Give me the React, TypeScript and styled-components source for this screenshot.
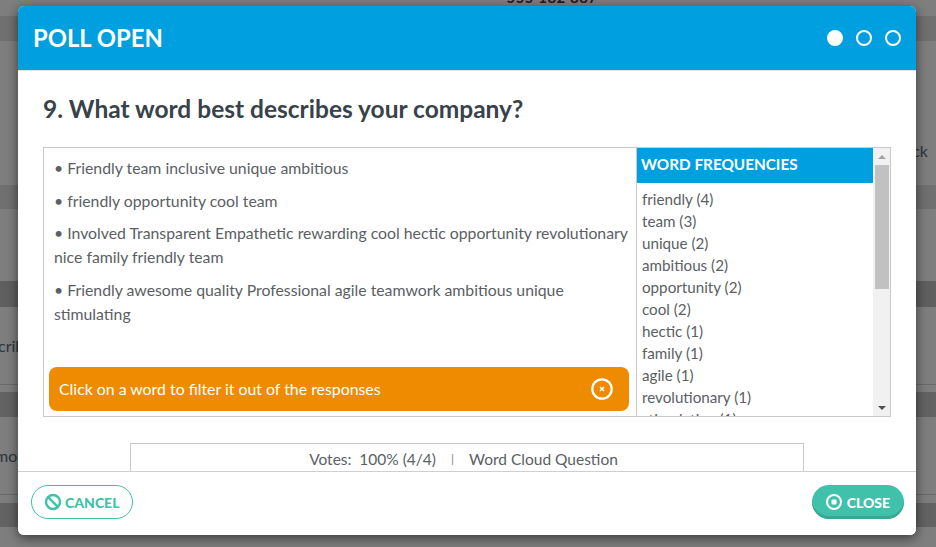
import styled, { createGlobalStyle } from "styled-components";

const GlobalStyle = createGlobalStyle`
  html, body {
    margin: 0;
    height: 100%;
    overflow: hidden;
    font-family: "Lato", "Open Sans", sans-serif;
  }
`;

const RESPONSES = [
  "• Friendly team inclusive unique ambitious",
  "• friendly opportunity cool team",
  "• Involved Transparent Empathetic rewarding cool hectic opportunity revolutionary nice family friendly team",
  "• Friendly awesome quality Professional agile teamwork ambitious unique stimulating",
];

const WORDS = [
  "friendly (4)",
  "team (3)",
  "unique (2)",
  "ambitious (2)",
  "opportunity (2)",
  "cool (2)",
  "hectic (1)",
  "family (1)",
  "agile (1)",
  "revolutionary (1)",
  "stimulating (1)",
];

const Page = styled.div`
  position: relative;
  width: 936px;
  height: 547px;
  overflow: hidden;
  background: #7e7e7e;
`;

const TopNumber = styled.div`
  height: 16px;
  display: flex;
  align-items: flex-start;
  justify-content: center;
  padding-left: 168px;
  box-sizing: border-box;
  overflow: hidden;
  color: #1c1c1c;
  font-size: 15px;
  font-weight: 700;
  letter-spacing: 0.5px;

  span {
    margin-top: -9px;
    line-height: 12px;
  }
`;

const Band = styled.div<{ $height: number; $shade: string }>`
  height: ${(p) => p.$height}px;
  background: ${(p) => p.$shade};
`;

const TextRow = styled.div<{ $height: number; $right?: boolean; $line?: boolean; $top?: number }>`
  height: ${(p) => p.$height}px;
  box-sizing: border-box;
  display: flex;
  align-items: center;
  justify-content: ${(p) => (p.$right ? "flex-end" : "flex-start")};
  padding: ${(p) => p.$top ?? 0}px ${(p) => (p.$right ? 8 : 0)}px 0 0;
  border-bottom: ${(p) => (p.$line ? "1px solid #6a6a6a" : "none")};
  color: #2b3440;
  font-size: 16px;
`;

const ClippedText = styled.span<{ $shift: number }>`
  margin-left: ${(p) => p.$shift}px;
`;

const Overlay = styled.div`
  position: absolute;
  inset: 0;
  box-sizing: border-box;
  padding: 6px 20px 12px 18px;
`;

const Modal = styled.div`
  height: 100%;
  display: flex;
  flex-direction: column;
  overflow: hidden;
  background: #fff;
  border-radius: 6px;
  box-shadow: 0 3px 12px rgba(0, 0, 0, 0.55);
`;

const Header = styled.header`
  height: 64px;
  flex: none;
  display: flex;
  align-items: center;
  justify-content: space-between;
  padding: 0 15px;
  background: #009fdf;
  border-bottom: 1px solid #e4e4e4;
`;

const Title = styled.h1`
  margin: 0;
  padding-top: 2px;
  color: #fff;
  font-size: 23.8px;
  font-weight: 700;
  line-height: 1;
`;

const Steps = styled.div`
  display: flex;
  gap: 13px;
`;

const Step = styled.span<{ $active?: boolean }>`
  width: 16px;
  height: 16px;
  box-sizing: border-box;
  border-radius: 50%;
  border: 2px solid #fff;
  background: ${(p) => (p.$active ? "#fff" : "transparent")};
`;

const Body = styled.main`
  flex: 1;
  min-height: 0;
  overflow: hidden;
  padding: 0 25px;
  display: flex;
  flex-direction: column;
  align-items: center;
`;

const Question = styled.h2`
  align-self: stretch;
  margin: 23px 0 23px;
  height: 30px;
  color: #37424a;
  font-size: 24.5px;
  font-weight: 700;
  line-height: 30px;
`;

const ResultBox = styled.section`
  align-self: stretch;
  height: 270px;
  flex: none;
  box-sizing: border-box;
  display: flex;
  border: 1px solid #c9c9c9;
`;

const ResponsesPane = styled.div`
  flex: 1;
  min-width: 0;
  display: flex;
  flex-direction: column;
  padding: 8px 7px 5px 5px;
`;

const ResponseList = styled.div`
  flex: 1;
  padding: 0 0 0 5px;
  margin-right: -5px;
`;

const Response = styled.p`
  margin: 0 0 8.5px;
  color: #5a6064;
  font-size: 15.8px;
  line-height: 24px;
`;

const Hint = styled.div`
  height: 44px;
  flex: none;
  display: flex;
  align-items: center;
  justify-content: space-between;
  padding: 0 16px 1px 10px;
  box-sizing: border-box;
  background: #ee8b00;
  border-radius: 8px;
  color: #fff;
  font-size: 15.85px;
`;

const WordsPane = styled.aside`
  width: 236px;
  flex: none;
  display: flex;
  flex-direction: column;
  overflow: hidden;
  border-left: 1px solid #c9c9c9;
`;

const WordsHeading = styled.h3`
  height: 35px;
  flex: none;
  margin: 0;
  padding: 0 4px;
  background: #009fdf;
  color: #fff;
  font-size: 15.3px;
  font-weight: 700;
  line-height: 33px;
`;

const WordList = styled.ul`
  flex: 1;
  min-height: 0;
  overflow: hidden;
  margin: 0;
  padding: 5px 5px 0 5px;
  list-style: none;
`;

const Word = styled.li`
  height: 22px;
  color: #5a6064;
  font-size: 15.2px;
  line-height: 22px;
`;

const ScrollTrack = styled.div`
  width: 17px;
  flex: none;
  display: flex;
  flex-direction: column;
  align-items: center;
  background: #f1f1f1;
`;

const ScrollArrow = styled.span<{ $down?: boolean }>`
  height: 17px;
  flex: none;
  display: flex;
  align-items: center;

  &::before {
    content: "";
    border-left: 4px solid transparent;
    border-right: 4px solid transparent;
    border-bottom: ${(p) => (p.$down ? "0" : "4px solid #a3a3a3")};
    border-top: ${(p) => (p.$down ? "4px solid #505050" : "0")};
  }
`;

const ScrollThumb = styled.div`
  width: 14px;
  height: 124px;
  flex: none;
  background: #c1c1c1;
`;

const ScrollGap = styled.div`
  flex: 1;
`;

const VotesBar = styled.div`
  width: 674px;
  height: 40px;
  flex: none;
  box-sizing: border-box;
  margin-top: 26px;
  padding-right: 7px;
  display: flex;
  justify-content: center;
  gap: 15px;
  border: 1px solid #c9c9c9;
  color: #5a6064;
  font-size: 15.5px;
  line-height: 30px;
`;

const Pipe = styled.span`
  color: #7a7f82;
  font-size: 12px;
`;

const Footer = styled.footer`
  height: 64px;
  flex: none;
  box-sizing: border-box;
  display: flex;
  align-items: flex-start;
  justify-content: space-between;
  padding: 13px 12px 0 13px;
  background: #fff;
  border-top: 1px solid #cfcfcf;
`;

const FooterButton = styled.button<{ $solid?: boolean }>`
  height: 34px;
  box-sizing: border-box;
  display: flex;
  align-items: center;
  gap: ${(p) => (p.$solid ? "4px" : "3px")};
  padding: ${(p) => (p.$solid ? "0 14px 0 13px" : "0 13px 0 12px")};
  border-radius: 17px;
  border: ${(p) => (p.$solid ? "0" : "1px solid #40c1aa")};
  background: ${(p) => (p.$solid ? "#40c1aa" : "#fff")};
  box-shadow: ${(p) => (p.$solid ? "inset 0 -3px 0 #36a893" : "none")};
  color: ${(p) => (p.$solid ? "#fff" : "#40c1aa")};
  font-family: inherit;
  font-size: 14px;
  font-weight: 900;
`;

function BanIcon() {
  return (
    <svg width="18" height="18" viewBox="0 0 18 18" fill="none" stroke="#40c1aa" strokeWidth="2.4">
      <circle cx="9" cy="9" r="7" />
      <line x1="4.2" y1="4.2" x2="13.8" y2="13.8" />
    </svg>
  );
}

function StopIcon() {
  return (
    <svg width="18" height="18" viewBox="0 0 18 18">
      <circle cx="9" cy="9" r="7" fill="none" stroke="#fff" strokeWidth="2" />
      <rect x="6.5" y="6.5" width="5" height="5" rx="1" fill="#fff" />
    </svg>
  );
}

function DismissIcon() {
  return (
    <svg width="22" height="22" viewBox="0 0 22 22" fill="none" stroke="#fff">
      <circle cx="11" cy="11" r="9.7" strokeWidth="2.2" />
      <path d="M9 9l4 4M13 9l-4 4" strokeWidth="1.6" />
    </svg>
  );
}

export default function App() {
  return (
    <>
      <GlobalStyle />
      <Page>
        <TopNumber>
          <span>555 182 887</span>
        </TopNumber>
        <Band $height={25} $shade="#707070" />
        <TextRow $height={144} $right $top={74}>
          <span>ck</span>
        </TextRow>
        <Band $height={24} $shade="#707070" />
        <TextRow $height={72} />
        <Band $height={26} $shade="#5f5f5f" />
        <TextRow $height={78} $line>
          <ClippedText $shift={-2}>crib</ClippedText>
        </TextRow>
        <TextRow $height={7} />
        <Band $height={25} $shade="#636363" />
        <TextRow $height={78} $line>
          <ClippedText $shift={-5}>mos</ClippedText>
        </TextRow>
        <TextRow $height={8} />
        <Band $height={24} $shade="#636363" />

        <Overlay>
          <Modal>
            <Header>
              <Title>POLL OPEN</Title>
              <Steps>
                <Step $active />
                <Step />
                <Step />
              </Steps>
            </Header>
            <Body>
              <Question>9. What word best describes your company?</Question>
              <ResultBox>
                <ResponsesPane>
                  <ResponseList>
                    {RESPONSES.map((text) => (
                      <Response key={text}>{text}</Response>
                    ))}
                  </ResponseList>
                  <Hint>
                    Click on a word to filter it out of the responses
                    <DismissIcon />
                  </Hint>
                </ResponsesPane>
                <WordsPane>
                  <WordsHeading>WORD FREQUENCIES</WordsHeading>
                  <WordList>
                    {WORDS.map((word) => (
                      <Word key={word}>{word}</Word>
                    ))}
                  </WordList>
                </WordsPane>
                <ScrollTrack>
                  <ScrollArrow />
                  <ScrollThumb />
                  <ScrollGap />
                  <ScrollArrow $down />
                </ScrollTrack>
              </ResultBox>
              <VotesBar>
                <span>Votes:&nbsp; 100% (4/4)</span>
                <Pipe>|</Pipe>
                <span>Word Cloud Question</span>
              </VotesBar>
            </Body>
            <Footer>
              <FooterButton>
                <BanIcon />
                CANCEL
              </FooterButton>
              <FooterButton $solid>
                <StopIcon />
                CLOSE
              </FooterButton>
            </Footer>
          </Modal>
        </Overlay>
      </Page>
    </>
  );
}
